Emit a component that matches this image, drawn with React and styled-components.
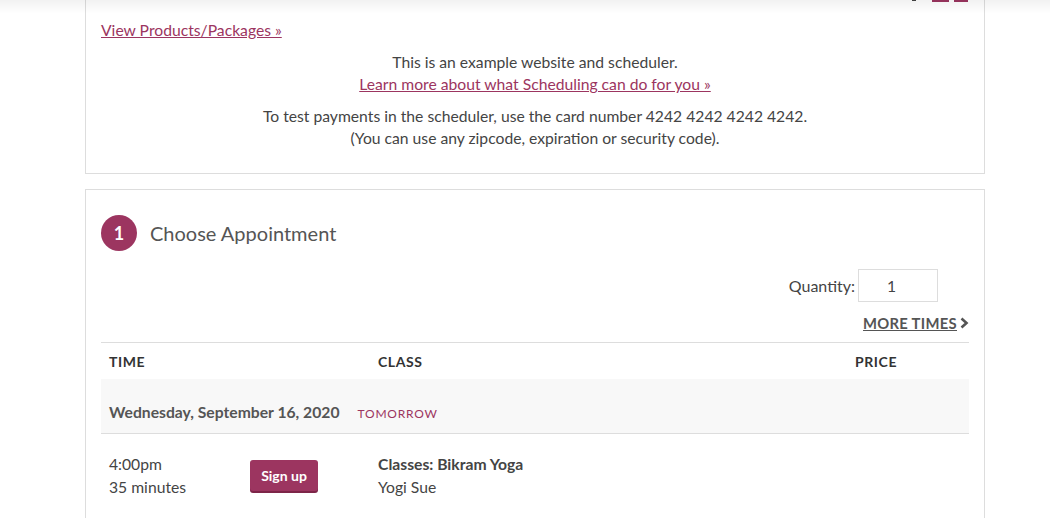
import React from 'react'
import styled, { createGlobalStyle } from 'styled-components'

const wine = '#9c3560'

const GlobalStyle = createGlobalStyle`
  html, body {
    margin: 0;
    padding: 0;
    background: #fff;
    overflow: hidden;
  }
  body {
    font-family: Lato, 'Open Sans', sans-serif;
    color: #444;
    font-size: 15.7px;
  }
`

const TopShade = styled.div`
  position: fixed;
  top: 0;
  left: 0;
  right: 0;
  height: 14px;
  background: linear-gradient(rgba(0, 0, 0, 0.05), rgba(0, 0, 0, 0));
  pointer-events: none;
`

const Page = styled.div`
  width: 900px;
  margin: -32px 0 0 85px;
`

const Card = styled.section`
  border: 1px solid #ddd;
  background: #fff;
  padding: ${p => p.$pad || '15px 15px 24px'};
  & + & {
    margin-top: 15px;
  }
`

/* only the bottom edge of the account links is on screen */
const AccountRow = styled.div`
  display: flex;
  justify-content: flex-end;
  align-items: flex-end;
  gap: 5px;
  height: 18px;
  padding-right: 1px;
`

const AccountIcon = styled.span`
  width: 4px;
  height: 4px;
  background: #444;
  margin-right: 11px;
  margin-bottom: 1px;
`

const LinkEdge = styled.span`
  width: ${p => p.$w}px;
  height: 2px;
  background: ${wine};
`

const Link = styled.a`
  color: ${wine};
  text-decoration: underline;
  cursor: pointer;
`

const LinkRow = styled.div`
  margin-top: 17px;
  line-height: 22px;
`

const Notice = styled.p`
  margin: 10px 0 0;
  text-align: center;
  line-height: 22px;
  color: #444;
`

const StepHead = styled.div`
  display: flex;
  align-items: center;
  gap: 13px;
`

const StepNum = styled.span`
  width: 36px;
  height: 36px;
  border-radius: 50%;
  background: ${wine};
  color: #fff;
  font-size: 18px;
  font-weight: 700;
  display: flex;
  align-items: center;
  justify-content: center;
`

const StepTitle = styled.h2`
  margin: 0;
  font-size: 20px;
  font-weight: 400;
  color: #555;
`

const QtyRow = styled.div`
  display: flex;
  justify-content: flex-end;
  align-items: center;
  gap: 3px;
  margin: 18px 31px 0 0;
  font-size: 16px;
  color: #444;
`

const QtyInput = styled.input`
  box-sizing: border-box;
  width: 80px;
  height: 33px;
  border: 1px solid #ddd;
  padding: 0 0 0 28px;
  font-family: inherit;
  font-size: 15.7px;
  color: #444;
  outline: none;
`

const MoreRow = styled.div`
  display: flex;
  justify-content: flex-end;
  margin-top: 12px;
  line-height: 18px;
`

const MoreLink = styled.a`
  display: flex;
  align-items: center;
  gap: 2px;
  color: #555;
  font-size: 14.8px;
  font-weight: 700;
  text-decoration: underline;
  text-transform: uppercase;
  letter-spacing: 0.3px;
`

const Table = styled.div`
  margin-top: 10px;
  border-top: 1px solid #ddd;
`

const Row = styled.div`
  display: grid;
  grid-template-columns: 269px 477px 122px;
  background: ${p => p.$bg || 'transparent'};
  border-bottom: ${p => (p.$line ? '1px solid #ddd' : 'none')};
`

const HeadCell = styled.div`
  padding: 0 8px;
  height: 36px;
  display: flex;
  align-items: center;
  font-size: 14px;
  font-weight: 700;
  letter-spacing: 0.6px;
  color: #333;
  text-transform: uppercase;
`

const DayCell = styled.div`
  grid-column: 1 / -1;
  display: flex;
  align-items: baseline;
  gap: 18px;
  padding: 24px 8px 10px;
  line-height: 18px;
`

const DayName = styled.span`
  font-size: 15.7px;
  font-weight: 700;
  color: #555;
`

const DayTag = styled.span`
  font-size: 12px;
  color: ${wine};
  letter-spacing: 0.8px;
  text-transform: uppercase;
`

const Cell = styled.div`
  padding: 19px 8px 20px;
  line-height: 23px;
  color: #444;
`

const TimeCell = styled(Cell)`
  display: grid;
  grid-template-columns: 141px auto;
  align-items: center;
`

const SignUp = styled.button`
  justify-self: start;
  width: 68px;
  height: 31px;
  margin-top: -1px;
  border: none;
  border-radius: 3px;
  background: ${wine};
  box-shadow: 0 2px 0 #7d2548;
  color: #fff;
  font-family: inherit;
  font-size: 14px;
  font-weight: 700;
  cursor: pointer;
`

const ClassName = styled.div`
  font-weight: 700;
  color: #444;
`

const Chevron = () => (
  <svg width="10" height="12" viewBox="0 0 10 12" aria-hidden="true">
    <path d="M2.5 1.5 L7.5 6 L2.5 10.5" fill="none" stroke="#555" strokeWidth="2.6" />
  </svg>
)

export default function App() {
  return (
    <>
      <GlobalStyle />
      <TopShade />
      <Page>
        <Card>
          <AccountRow aria-hidden="true">
            <AccountIcon />
            <LinkEdge $w={17} />
            <LinkEdge $w={14} />
          </AccountRow>
          <LinkRow>
            <Link>View Products/Packages »</Link>
          </LinkRow>
          <Notice>
            This is an example website and scheduler.
            <br />
            <Link>Learn more about what Scheduling can do for you »</Link>
          </Notice>
          <Notice>
            To test payments in the scheduler, use the card number 4242 4242 4242 4242.
            <br />
            (You can use any zipcode, expiration or security code).
          </Notice>
        </Card>

        <Card $pad="25px 15px 0">
          <StepHead>
            <StepNum>1</StepNum>
            <StepTitle>Choose Appointment</StepTitle>
          </StepHead>
          <QtyRow>
            <label htmlFor="qty">Quantity:</label>
            <QtyInput id="qty" defaultValue="1" />
          </QtyRow>
          <MoreRow>
            <MoreLink>
              More Times <Chevron />
            </MoreLink>
          </MoreRow>
          <Table>
            <Row>
              <HeadCell>Time</HeadCell>
              <HeadCell>Class</HeadCell>
              <HeadCell>Price</HeadCell>
            </Row>
            <Row $bg="#f8f8f8" $line>
              <DayCell>
                <DayName>Wednesday, September 16, 2020</DayName>
                <DayTag>Tomorrow</DayTag>
              </DayCell>
            </Row>
            <Row $line>
              <TimeCell>
                <div>
                  4:00pm
                  <br />
                  35 minutes
                </div>
                <SignUp>Sign up</SignUp>
              </TimeCell>
              <Cell>
                <ClassName>Classes: Bikram Yoga</ClassName>
                Yogi Sue
              </Cell>
              <Cell />
            </Row>
          </Table>
        </Card>
      </Page>
    </>
  )
}
